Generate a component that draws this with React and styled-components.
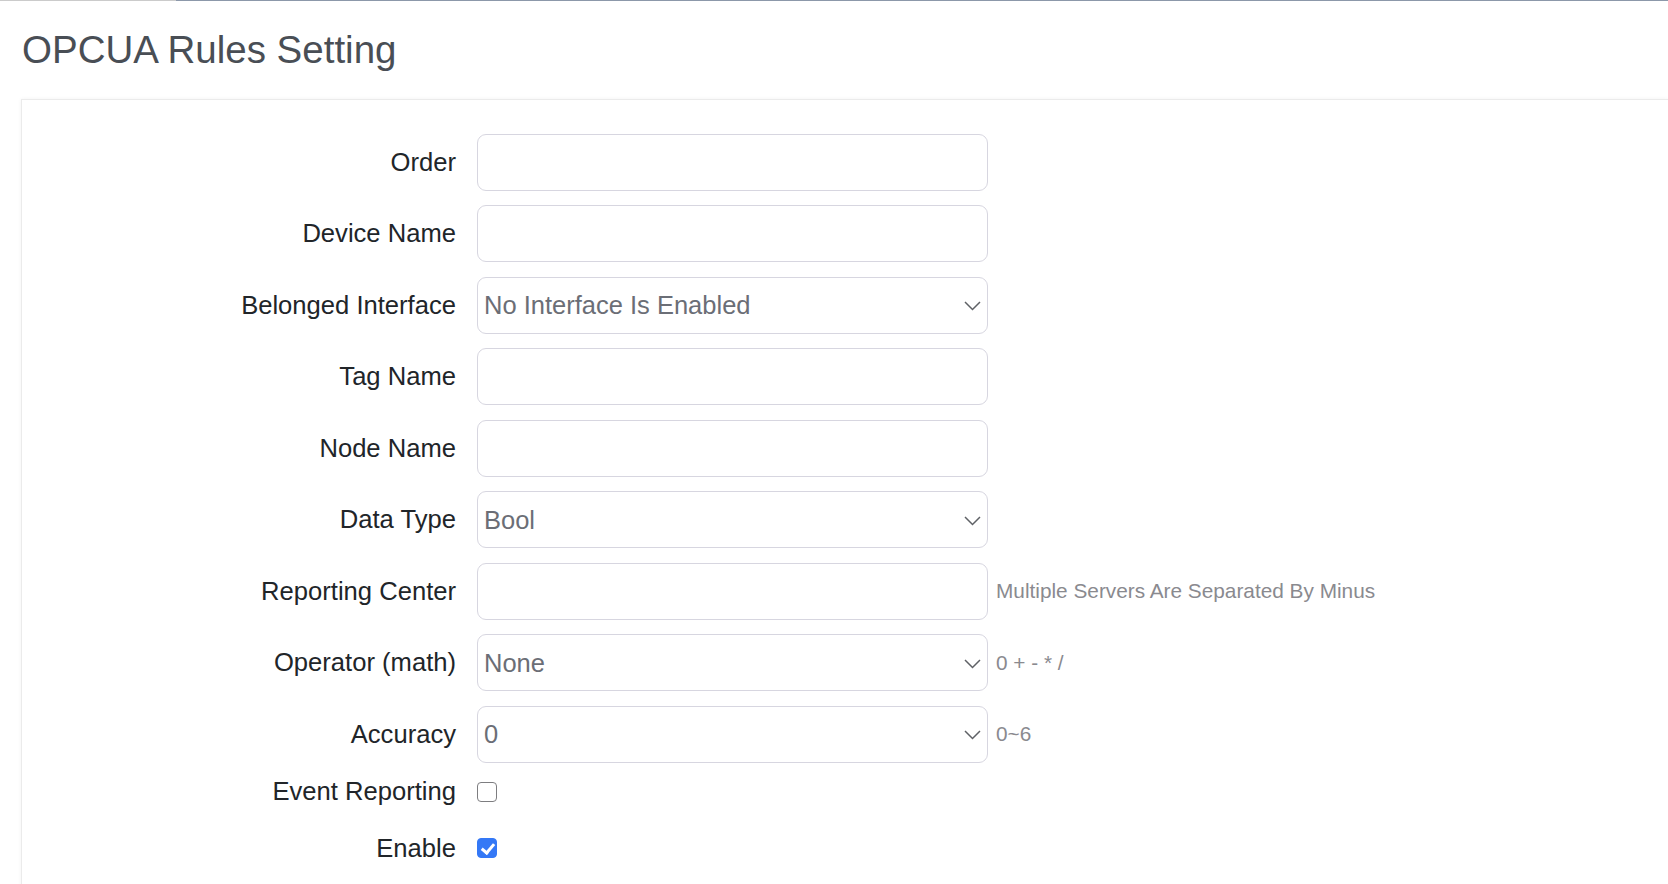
import styled, { createGlobalStyle } from "styled-components";

const GlobalStyle = createGlobalStyle`
    html, body {
        margin: 0;
        padding: 0;
        background: #FFF;
        font-family: "Liberation Sans", Arial, sans-serif;
        color: #212529;
    }
    * {
        box-sizing: border-box;
    }
`

const Page = styled.div`
    min-height: 884px;
    overflow: hidden;
`

const TopLine = styled.div`
    display: flex;
    height: 1px;
`

const LineSegment = styled.div`
    width: ${props => props.$width || "auto"};
    flex: ${props => props.$width ? "none" : "1"};
    background: ${props => props.$color};
`

const Title = styled.h2`
    margin: 30px 0 0 22px;
    font-size: 38.5px;
    line-height: 1;
    font-weight: 400;
    color: #494e55;
`

const Panel = styled.section`
    margin: 29px 0 0 21px;
    padding: 34px 0 40px;
    border-top: 1px solid #ebebeb;
    border-left: 1px solid #ebebeb;
    box-shadow: 0 0 4px rgba(0, 0, 0, 0.05);
    min-height: 800px;
    display: flex;
    flex-direction: column;
    gap: 14.5px;
`

const Row = styled.div`
    display: grid;
    grid-template-columns: 434px 511px auto;
    column-gap: 21px;
    align-items: center;
    height: ${props => props.$check ? "28px" : "57px"};
    margin-top: ${props => props.$spaced ? "14px" : "0"};
`

const Label = styled.label`
    text-align: right;
    font-size: 25.6px;
    color: #212529;
    white-space: nowrap;
`

const Field = styled.div`
    position: relative;
    height: 57px;
`

const Input = styled.input`
    width: 100%;
    height: 100%;
    border: 1px solid #d7d6e0;
    border-radius: 9px;
    background: #FFF;
    padding: 0 8px;
    font-family: inherit;
    font-size: 25.5px;
    color: #6b6e76;
    outline: none;
`

const Select = styled.select`
    appearance: none;
    width: 100%;
    height: 100%;
    border: 1px solid #d7d6e0;
    border-radius: 9px;
    background: #FFF;
    padding: 0 34px 0 6px;
    font-family: inherit;
    font-size: 25.5px;
    color: #6b6e76;
    outline: none;
`

const Chevron = styled.svg`
    position: absolute;
    right: 7px;
    top: 50%;
    width: 17px;
    height: 10px;
    margin-top: -4px;
    pointer-events: none;
`

const Help = styled.span`
    margin-left: -13px;
    font-size: 20.8px;
    color: #8a8a8f;
    white-space: nowrap;
`

const Check = styled.input`
    appearance: none;
    margin: 0;
    width: 20px;
    height: 20px;
    border: 1.5px solid #7d7d80;
    border-radius: 4px;
    background: #FFF;
    position: relative;

    &:checked {
        border-color: #3478f6;
        background: #3478f6;
    }
    &:checked::after {
        content: "";
        position: absolute;
        left: 6px;
        top: 2px;
        width: 5px;
        height: 10px;
        border: solid #FFF;
        border-width: 0 3px 3px 0;
        transform: rotate(40deg);
    }
`

const fields = [
    { label: "Order" },
    { label: "Device Name" },
    { label: "Belonged Interface", select: "No Interface Is Enabled" },
    { label: "Tag Name" },
    { label: "Node Name" },
    { label: "Data Type", select: "Bool" },
    { label: "Reporting Center", help: "Multiple Servers Are Separated By Minus" },
    { label: "Operator (math)", select: "None", help: "0 + - * /" },
    { label: "Accuracy", select: "0", help: "0~6" },
]

const App = () => {
    return (
        <Page>
            <GlobalStyle />
            <TopLine>
                <LineSegment $width="176px" $color="#cbcbcb" />
                <LineSegment $color="#8c98aa" />
            </TopLine>
            <Title>OPCUA Rules Setting</Title>
            <Panel>
                {fields.map(field => (
                    <Row key={field.label}>
                        <Label>{field.label}</Label>
                        <Field>
                            {field.select ? (
                                <>
                                    <Select defaultValue={field.select}>
                                        <option>{field.select}</option>
                                    </Select>
                                    <Chevron viewBox="0 0 17 10">
                                        <polyline points="1,1 8.5,8.5 16,1" fill="none" stroke="#5f6166" strokeWidth="1.5" />
                                    </Chevron>
                                </>
                            ) : (
                                <Input type="text" />
                            )}
                        </Field>
                        {field.help ? <Help>{field.help}</Help> : <span />}
                    </Row>
                ))}
                <Row $check>
                    <Label>Event Reporting</Label>
                    <Check type="checkbox" />
                    <span />
                </Row>
                <Row $check $spaced>
                    <Label>Enable</Label>
                    <Check type="checkbox" defaultChecked />
                    <span />
                </Row>
            </Panel>
        </Page>
    )
}

export default App;
